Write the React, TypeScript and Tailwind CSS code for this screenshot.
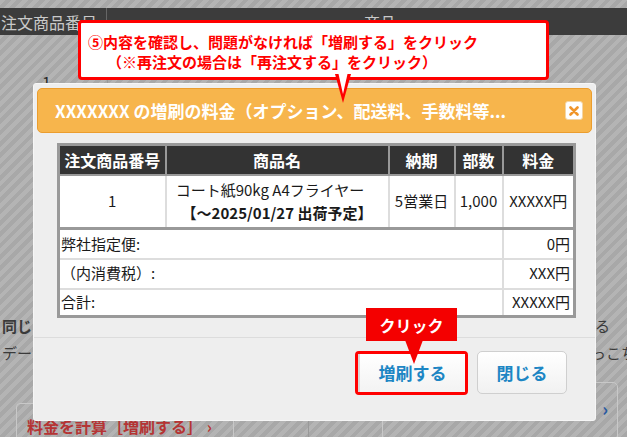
import React from "react";

export default function App() {
  return (
    <div className="relative w-[627px] h-[437px] overflow-hidden bg-[repeating-linear-gradient(135deg,#b4b4b4_0px,#b4b4b4_4px,#a8a8a8_4px,#a8a8a8_8px)] font-['Noto_Sans_CJK_JP','Noto_Sans',sans-serif]">
      {/* dimmed page behind */}
      <div className="flex flex-col">
        <div className="h-[8px]" />
        <div className="h-[27px] bg-[#3c3c3c] flex text-[#c9c9c9] text-[16px] leading-none">
          <div className="w-[107px] border-r border-[#666] flex items-center pl-[1px]">注文商品番号</div>
          <div className="flex-1 flex items-center justify-center pl-[26px]">商品</div>
        </div>
        <div className="h-[94px] flex">
          <div className="w-[107px] flex items-center justify-center pr-[14px] text-[16px] text-[#2a2a2a]">1</div>
          <div className="flex-1 border-l border-[#999]" />
        </div>
        <div className="h-[183px]" />
        <div className="h-[52px] flex justify-between text-[15px] leading-[27px] text-[#3a3a3a]">
          <div className="pl-[2px]">
            <div className="font-bold">同じ</div>
            <div>デー</div>
          </div>
          <div className="w-[36px] overflow-hidden whitespace-nowrap">
            <div className="pl-[4px]">る</div>
            <div>っこち</div>
          </div>
        </div>
        <div className="h-[73px] flex items-start">
          <div className="ml-[16px] mt-[39px] w-[218px] h-[40px] border border-[#c8c8c8] rounded-[4px] flex items-start pt-[10px] pl-[10px] text-[16px] font-bold text-[#b53434] whitespace-nowrap">
            料金を計算［増刷する］ ›
          </div>
          <div className="ml-[74px] w-[1px] h-[73px] bg-[#999]" />
          <div className="ml-[73px] mt-[18px] w-[236px] h-[60px] border border-[#c8c8c8] rounded-[5px] flex justify-end pt-[12px] pr-[9px] text-[18px] font-bold text-[#2a5aa0]">
            ›
          </div>
        </div>
      </div>

      {/* modal */}
      <div className="absolute left-[33px] top-[83px] w-[563px] h-[338px] bg-[#eeeeee] border border-[#f6f6f6] rounded-[3px] flex flex-col">
        <div className="mx-[3px] mt-[4px] h-[45px] rounded-[5px] border border-[#eb9d2e] bg-[#f7b54c] flex items-center justify-between pl-[17px] pr-[8px]">
          <span className="text-white font-bold text-[17px] whitespace-nowrap">XXXXXXX の増刷の料金（オプション、配送料、手数料等...</span>
          <span className="w-[18px] h-[19px] bg-white rounded-[3px] border border-[#f3d5a5] flex items-center justify-center">
            <svg width="10" height="10" viewBox="0 0 10 10">
              <path d="M1.5 1.5 L8.5 8.5 M8.5 1.5 L1.5 8.5" stroke="#f0952a" strokeWidth="2.6" strokeLinecap="round" />
            </svg>
          </span>
        </div>

        <table className="mt-[10px] ml-[23px] w-[516px] border-collapse border-[3px] border-[#999] bg-white text-[15px] text-[#1a1a1a] table-fixed">
          <colgroup>
            <col className="w-[107px]" />
            <col className="w-[223px]" />
            <col className="w-[66px]" />
            <col className="w-[48px]" />
            <col className="w-[72px]" />
          </colgroup>
          <thead>
            <tr className="h-[30px] bg-[#333] text-white text-[16px] font-bold">
              <th className="border-2 border-[#999] font-bold">注文商品番号</th>
              <th className="border-2 border-[#999] font-bold">商品名</th>
              <th className="border-2 border-[#999] font-bold">納期</th>
              <th className="border-2 border-[#999] font-bold">部数</th>
              <th className="border-2 border-[#999] font-bold">料金</th>
            </tr>
          </thead>
          <tbody>
            <tr className="h-[54px]">
              <td className="border-x-2 border-x-[#ddd] border-b-[3px] border-b-[#999] text-center">1</td>
              <td className="border-x-2 border-x-[#ddd] border-b-[3px] border-b-[#999] text-center leading-[23px] whitespace-nowrap">
                <div className="pr-[14px]">コート紙90kg A4フライヤー</div>
                <div className="font-bold">【～2025/01/27 出荷予定】</div>
              </td>
              <td className="border-x-2 border-x-[#ddd] border-b-[3px] border-b-[#999] text-center whitespace-nowrap">5営業日</td>
              <td className="border-x-2 border-x-[#ddd] border-b-[3px] border-b-[#999] text-center">1,000</td>
              <td className="border-x-2 border-x-[#ddd] border-b-[3px] border-b-[#999] text-center whitespace-nowrap">XXXXX円</td>
            </tr>
            <tr className="h-[30px]">
              <td colSpan={4} className="border-2 border-[#ddd] pl-[1px]">弊社指定便:</td>
              <td className="border-2 border-[#ddd] text-right pr-[3px]">0円</td>
            </tr>
            <tr className="h-[30px]">
              <td colSpan={4} className="border-2 border-[#ddd] pl-[1px]">（内消費税）:</td>
              <td className="border-2 border-[#ddd] text-right pr-[3px]">XXX円</td>
            </tr>
            <tr className="h-[28px]">
              <td colSpan={4} className="border-2 border-[#ddd] pl-[1px]">合計:</td>
              <td className="border-2 border-[#ddd] text-right pr-[3px]">XXXXX円</td>
            </tr>
          </tbody>
        </table>

        <div className="mt-[19px] border-t border-[#dcdcdc]" />
        <div className="mt-[13px] flex justify-end gap-[9px] pr-[28px]">
          <div className="w-[113px] h-[44px] border-[3px] border-[#f00] rounded-[4px] flex">
            <div className="flex-1 border-l-2 border-[#d8d8d8] bg-[linear-gradient(#ffffff,#f3f3f3)] flex items-center justify-center text-[17px] font-bold text-[#1d86c4]">
              増刷する
            </div>
          </div>
          <button className="w-[90px] h-[43px] border border-[#cfcfcf] rounded-[5px] bg-[linear-gradient(#ffffff,#f1f1f1)] flex items-center justify-center text-[17px] font-bold text-[#1d86c4]">
            閉じる
          </button>
        </div>
      </div>

      {/* click label */}
      <div className="absolute left-[366px] top-[308px] w-[91px] h-[33px] bg-[#f40000] flex items-center justify-center text-white text-[16px] font-bold">
        クリック
      </div>
      <svg className="absolute left-[403px] top-[340px]" width="22" height="25" viewBox="0 0 22 25">
        <polygon points="2,0 20,0 11,24" fill="#f40000" />
      </svg>

      {/* top callout */}
      <div className="absolute left-[78px] top-[20px] w-[471px] h-[60px] bg-white border-[3px] border-[#f00] rounded-[4px] text-[#f00] text-[15px] font-bold leading-[20px] pt-[9px] whitespace-nowrap">
        <div className="pl-[7px]">⑤内容を確認し、問題がなければ「増刷する」をクリック</div>
        <div className="pl-[26px]">（※再注文の場合は「再注文する」をクリック）</div>
      </div>
      <svg className="absolute left-[332px] top-[74px]" width="22" height="32" viewBox="0 0 22 32">
        <polygon points="3,0 19,0 11,29" fill="#f00" />
        <polygon points="6.5,0 15.5,0 11,20" fill="#fff" />
      </svg>
    </div>
  );
}
